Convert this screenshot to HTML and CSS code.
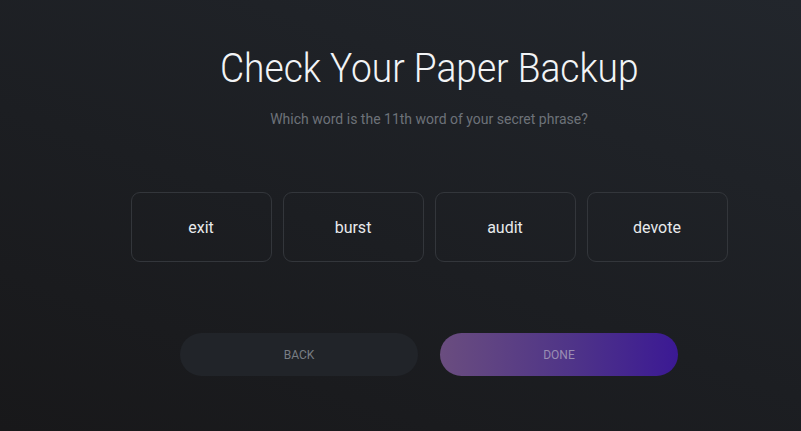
FILE: index.html
```html
<!doctype html>
<html lang="en">
  <head>
    <meta charset="UTF-8" />
    <meta name="viewport" content="width=device-width, initial-scale=1.0" />
    <title>Check Your Paper Backup</title>
    <link rel="stylesheet" href="styles.css">
  </head>
  <body>
    <main class="check">
      <h1 class="title">Check Your Paper Backup</h1>
      <p class="question">Which word is the 11th word of your secret phrase?</p>

      <div class="words">
        <button class="word">exit</button>
        <button class="word">burst</button>
        <button class="word">audit</button>
        <button class="word">devote</button>
      </div>

      <div class="actions">
        <button class="pill back">Back</button>
        <button class="pill done">Done</button>
      </div>
    </main>
  </body>
</html>
```

FILE: styles.css
```css
html,
body {
  height: 100%;
}
body {
  margin: 0;
  font-family: Roboto, "Liberation Sans", sans-serif;
  background: linear-gradient(20deg, #18181a 0%, #1c1e22 45%, #22262c 100%);
  color: #eceef0;
  overflow: hidden;
}
.check {
  display: flex;
  flex-direction: column;
  align-items: center;
  padding-left: 57px;
  padding-top: 42px;
}
/* condensed look of the heading font */
.title {
  margin: 0;
  font-weight: 300;
  font-size: 41px;
  line-height: 52px;
  color: #f2f4f6;
  white-space: nowrap;
  transform: scaleX(0.905);
}
.question {
  margin: 16px 0 0;
  font-size: 14px;
  line-height: 18px;
  color: #6d7279;
}
.words {
  display: flex;
  gap: 11px;
  margin-top: 64px;
}
.word {
  width: 141px;
  height: 70px;
  box-sizing: border-box;
  background: transparent;
  border: 1px solid #33363b;
  border-radius: 9px;
  font-family: inherit;
  font-size: 16px;
  color: #e8eaec;
  cursor: pointer;
}
.actions {
  display: flex;
  gap: 22px;
  margin-top: 71px;
}
.pill {
  width: 238px;
  height: 43px;
  border: none;
  border-radius: 22px;
  font-family: inherit;
  font-size: 12px;
  text-transform: uppercase;
  cursor: pointer;
}
.back {
  background: #212429;
  color: #787d84;
}
.done {
  background: linear-gradient(90deg, #6a4d7f 0%, #4f3488 55%, #3b1994 100%);
  color: #9a8db3;
}
```
